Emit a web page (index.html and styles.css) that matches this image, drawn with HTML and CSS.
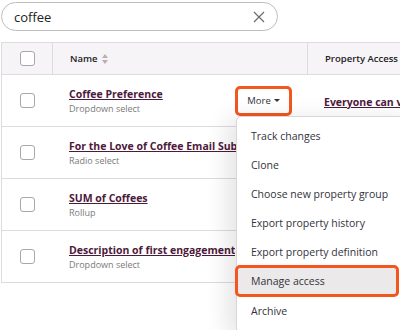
FILE: index.html
```html
<!DOCTYPE html>
<html lang="en">
<head>
    <meta charset="UTF-8">
    <title>Properties</title>
    <link rel="stylesheet" href="styles.css">
</head>
<body>

    <div class="search-bar">
        <div class="search">
            <span class="search-text">coffee</span>
            <svg class="clear" width="12" height="12" viewBox="0 0 12 12">
                <path d="M1 1 L11 11 M11 1 L1 11" stroke="#6b6b6b" stroke-width="1.2" fill="none"/>
            </svg>
        </div>
    </div>

    <div class="table">
        <div class="row head">
            <div class="cell check"><span class="box"></span></div>
            <div class="cell name">
                <span class="th">Name</span>
                <svg class="sort" width="6" height="10" viewBox="0 0 6 10">
                    <path d="M3 0 L6 4 L0 4 Z M3 10 L6 6 L0 6 Z" fill="#b5b0b8"/>
                </svg>
            </div>
            <div class="cell access"><span class="th">Property Access</span></div>
        </div>

        <div class="row">
            <div class="cell check"><span class="box"></span></div>
            <div class="cell name">
                <div class="label">
                    <a class="title">Coffee Preference</a>
                    <span class="sub">Dropdown select</span>
                </div>
                <span class="more-ring"><span class="more">More <i class="caret"></i></span></span>
            </div>
            <div class="cell access"><a class="title">Everyone can v</a></div>
        </div>

        <div class="row">
            <div class="cell check"><span class="box"></span></div>
            <div class="cell name clip">
                <div class="label">
                    <a class="title">For the Love of Coffee Email Sub</a>
                    <span class="sub">Radio select</span>
                </div>
            </div>
            <div class="cell access"></div>
        </div>

        <div class="row">
            <div class="cell check"><span class="box"></span></div>
            <div class="cell name">
                <div class="label">
                    <a class="title">SUM of Coffees</a>
                    <span class="sub">Rollup</span>
                </div>
            </div>
            <div class="cell access"></div>
        </div>

        <div class="row">
            <div class="cell check"><span class="box"></span></div>
            <div class="cell name">
                <div class="label">
                    <a class="title">Description of first engagement</a>
                    <span class="sub">Dropdown select</span>
                </div>
            </div>
            <div class="cell access"></div>
        </div>
    </div>

    <ul class="menu">
        <li>Track changes</li>
        <li>Clone</li>
        <li>Choose new property group</li>
        <li>Export property history</li>
        <li>Export property definition</li>
        <li class="active">Manage access</li>
        <li>Archive</li>
    </ul>

</body>
</html>
```

FILE: styles.css
```css
body {
    margin: 0;
    width: 400px;
    height: 330px;
    overflow: hidden;
    position: relative;
    background: #fff;
    font-family: "Open Sans", "Noto Sans", sans-serif;
    color: #33333b;
}
.search-bar {
    padding: 2px 0 0 1px;
}
.search {
    width: 251px;
    height: 27px;
    border: 1px solid #bdbdbd;
    border-radius: 15px;
    display: flex;
    align-items: center;
    justify-content: space-between;
    padding: 0 12px;
}
.search-text {
    font-size: 13px;
    color: #222;
}
.table {
    margin: 11px 0 0 1px;
    width: 460px;
    border-left: 1px solid #dedbdf;
    border-top: 1px solid #dedbdf;
}
.row {
    display: grid;
    grid-template-columns: 50px 255px 1fr;
    height: 51px;
    border-bottom: 1px solid #dedbdf;
}
.row.head {
    height: 31px;
    background: #f6f4f7;
}
.cell {
    display: flex;
    align-items: center;
    overflow: hidden;
    white-space: nowrap;
}
.head .cell + .cell {
    border-left: 1px solid #dedbdf;
}
.check {
    justify-content: center;
}
.box {
    width: 13px;
    height: 13px;
    border: 1px solid #aaa6ad;
    border-radius: 3px;
    background: #fff;
}
.name {
    padding-left: 17px;
    justify-content: space-between;
}
.name.clip {
    padding-right: 70px;
}
.access {
    padding-left: 17px;
}
.th {
    font-size: 9.5px;
    font-weight: 600;
    color: #222;
}
.sort {
    margin-left: 4px;
    margin-right: auto;
}
.label {
    display: flex;
    flex-direction: column;
    min-width: 0;
    overflow: hidden;
}
.title {
    font-size: 10.5px;
    font-weight: 700;
    color: #4d1a3b;
    text-decoration: underline;
}
.sub {
    font-size: 9px;
    color: #7a7a7a;
    margin-top: 1px;
}
.access .title {
    margin-top: 2px;
}
.more-ring {
    margin-right: 15px;
    border: 3px solid #f3561f;
    border-radius: 5px;
    padding: 1px;
}
.more {
    display: flex;
    align-items: center;
    width: 49px;
    height: 22px;
    justify-content: center;
    font-size: 9.5px;
    color: #33333b;
}
.caret {
    display: inline-block;
    margin-left: 3px;
    border-left: 3px solid transparent;
    border-right: 3px solid transparent;
    border-top: 3px solid #33333b;
}
.menu {
    position: absolute;
    left: 236px;
    top: 116px;
    width: 180px;
    height: 211px;
    margin: 0;
    padding: 5px 0 0;
    list-style: none;
    background: #fff;
    border: 1px solid #d9d6da;
    border-radius: 5px;
    box-shadow: -10px 2px 22px rgba(0, 0, 0, 0.1);
}
.menu li {
    height: 29px;
    line-height: 29px;
    padding-left: 14px;
    font-size: 10.5px;
    color: #33333b;
}
.menu li.active {
    margin: -2px 18px 0 -2px;
    padding-left: 13px;
    height: 26px;
    line-height: 26px;
    background: #ebe9ea;
    border: 3px solid #f3561f;
    border-radius: 5px;
}
```
